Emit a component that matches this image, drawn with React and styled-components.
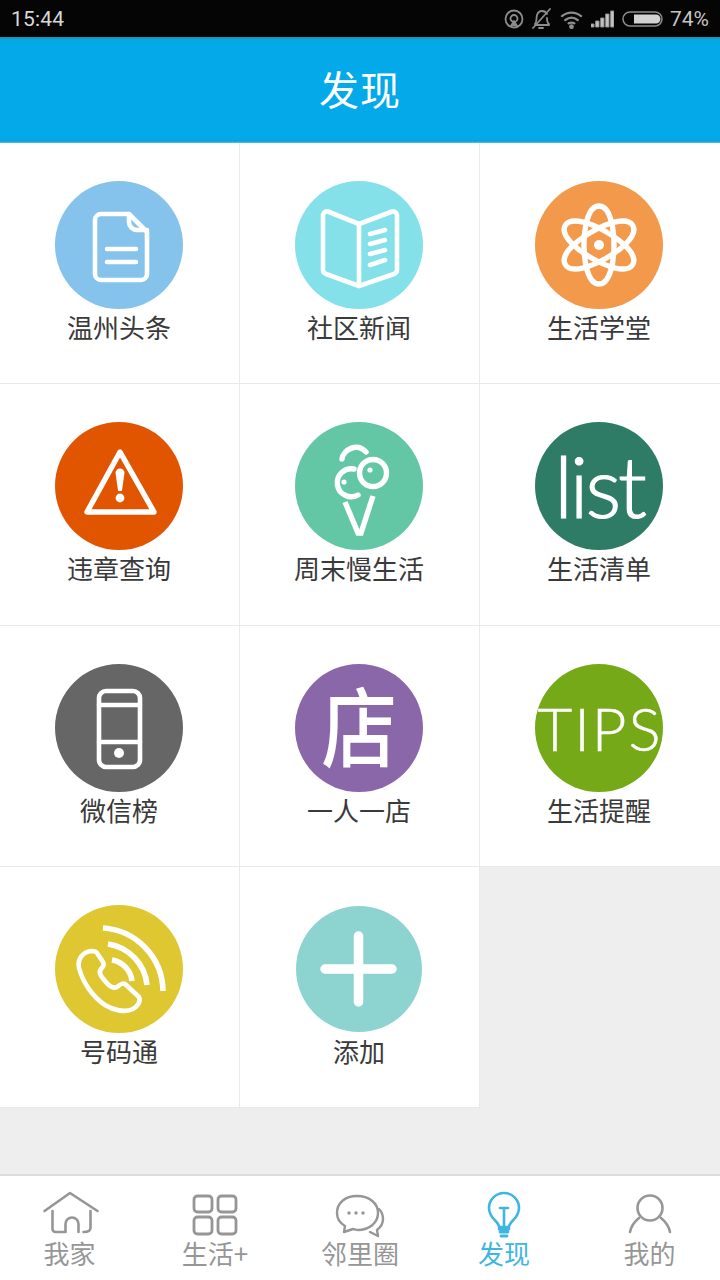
import React from 'react'
import styled, { createGlobalStyle } from 'styled-components'

const CJK = '"Noto Sans CJK SC", "Noto Sans", sans-serif'

const GlobalStyle = createGlobalStyle`
  html, body {
    margin: 0;
    padding: 0;
    background: #eeeeee;
  }
  * {
    box-sizing: border-box;
  }
`

const Line = styled.svg.attrs({ fill: 'none', stroke: '#fff', strokeLinecap: 'round', strokeLinejoin: 'round' })`
  display: block;
  width: 100%;
  height: 100%;
`

const DocIcon = () => (
  <Line viewBox="0 0 128 128" strokeWidth="4.6">
    <path d="M74 33H46a6 6 0 0 0-6 6v54a6 6 0 0 0 6 6h40a6 6 0 0 0 6-6V51Z" />
    <path d="M74 33v8a8 8 0 0 0 8 8h10" />
    <path d="M52 68h29M52 81h29" />
  </Line>
)

const BookIcon = () => (
  <Line viewBox="0 0 128 128" strokeWidth="4.6">
    <path d="M64 43 34 31a4 4 0 0 0-6 4v53a5 5 0 0 0 3 5l33 12 35-12a5 5 0 0 0 3-5V35a4 4 0 0 0-6-4Z" />
    <path d="M64 43v62" />
    <path d="M75 53l15-4M75 63l15-4M75 73l15-4M75 84l15-5" />
  </Line>
)

const petal = 'M64 25C76 25 79 50 79 64S76 103 64 103 49 78 49 64 52 25 64 25Z'

const AtomIcon = () => (
  <Line viewBox="0 0 128 128" strokeWidth="5.4">
    <path d={petal} />
    <path d={petal} transform="rotate(60 64 64)" />
    <path d={petal} transform="rotate(120 64 64)" />
    <circle cx="64" cy="64" r="5" fill="#fff" stroke="none" />
  </Line>
)

const WarningIcon = () => (
  <Line viewBox="0 0 128 128" strokeWidth="5.4">
    <path d="M65 30 32 90h67Z" />
    <path d="M60.500 51a4.500 4.500 0 0 1 9 0l-2.600 18h-3.800Z" fill="#fff" stroke="none" />
    <circle cx="65" cy="76" r="4.400" fill="#fff" stroke="none" />
  </Line>
)

const IceCreamIcon = () => (
  <Line viewBox="0 0 128 128" strokeWidth="5.4">
    <path d="M50 80 63 111H66L78 74" strokeLinecap="butt" strokeLinejoin="miter" />
    <circle cx="78" cy="51" r="13.500" />
    <circle cx="75" cy="48" r="2.600" fill="#fff" stroke="none" />
    <path d="M59 47A14 14 0 1 0 63 73" />
    <circle cx="49" cy="60" r="2.600" fill="#fff" stroke="none" />
    <path d="M47 37C48 28 62 20 71 30" />
  </Line>
)

const PhoneIcon = () => (
  <Line viewBox="0 0 128 128" strokeWidth="4.6">
    <rect x="44" y="27" width="41" height="76" rx="7" />
    <path d="M44 41h41M44 78h41" />
    <circle cx="64" cy="89" r="5" fill="#fff" stroke="none" />
  </Line>
)

const CallIcon = () => (
  <Line viewBox="0 0 128 128" strokeWidth="5.6">
    <path
      d="M36 46C28 47 22 54 24 63 28 78 38 92 50 100 58 105 70 108 78 104 83 101 86 96 84 92L70 79C67 77 65 80 62 82 58 84 54 81 50 76 46 71 43 68 46 64 48 62 50 60 48 57L42 48C41 46 38 46 36 46Z"
      strokeWidth="4.600"
    />
    <path d="M48 23A64 64 0 0 1 108 86" strokeLinecap="butt" />
    <path d="M53 39A46 46 0 0 1 92 80" strokeLinecap="butt" />
    <path d="M57 55A24 24 0 0 1 77 76" strokeLinecap="butt" />
  </Line>
)

const PlusIcon = () => (
  <Line viewBox="0 0 126 126" strokeWidth="9.500">
    <path d="M62.500 30v66M29 63h67" />
  </Line>
)

const Page = styled.div`
  width: 720px;
  height: 1280px;
  display: flex;
  flex-direction: column;
  overflow: hidden;
  font-family: ${CJK};
`

const StatusBar = styled.div`
  height: 37px;
  flex: none;
  background: #050505;
  color: #c9c9c9;
  display: flex;
  align-items: center;
  padding: 0 11px;
  font-family: "Roboto", sans-serif;
  font-size: 21px;
`

const Clock = styled.span`
  color: #d8d8d8;
  letter-spacing: 0.2px;
`

const StatusIcons = styled.div`
  margin-left: auto;
  display: flex;
  align-items: center;
  gap: 8px;
`

const Glyph = styled.svg.attrs({ fill: 'none', stroke: '#8c8c8c', strokeLinecap: 'round', strokeLinejoin: 'round' })`
  display: block;
`

const Percent = styled.span`
  margin-left: -1px;
  color: #c4c4c4;
`

const Header = styled.header`
  height: 106px;
  flex: none;
  background: linear-gradient(
    #1a8fb5 0,
    #0fa4d8 2px,
    #03a9e8 5px,
    #03a9e8 calc(100% - 4px),
    #0a9ed6 calc(100% - 2px),
    #4fc6ea 100%
  );
  color: #fff;
  font-size: 40px;
  display: flex;
  align-items: center;
  justify-content: center;
  letter-spacing: 1px;
  padding-bottom: 4px;
`

const Main = styled.main`
  flex: 1;
  background: #eeeeee;
`

const Grid = styled.div`
  display: grid;
  grid-template-columns: repeat(3, 240px);
  grid-auto-rows: 241.25px;
`

const Cell = styled.div`
  background: #fff;
  display: flex;
  flex-direction: column;
  align-items: center;
  padding-top: 38px;
  padding-right: ${(p) => (p.$last ? '2px' : '1px')};
  border-bottom: 1px solid #e9e9e9;
  border-right: ${(p) => (p.$last ? 'none' : '1px solid #e9e9e9')};
`

const Circle = styled.div`
  width: ${(p) => p.$size}px;
  height: ${(p) => p.$size}px;
  margin: ${(p) => (128 - p.$size) / 2}px;
  flex: none;
  border-radius: 50%;
  background: ${(p) => p.$bg};
  color: #fff;
  display: flex;
  align-items: center;
  justify-content: center;
`

const WordList = styled.span`
  font-family: "Lato", sans-serif;
  font-weight: 300;
  font-size: 84px;
  line-height: 1;
  letter-spacing: -3px;
  margin-top: -1px;
  -webkit-text-stroke: 1.2px #fff;
`

const WordTips = styled.span`
  font-family: "Lato", sans-serif;
  font-weight: 300;
  font-size: 60px;
  line-height: 1;
  letter-spacing: 2px;
  margin-right: -2px;
  white-space: nowrap;
  -webkit-text-stroke: 0.5px #fff;
`

const WordShop = styled.span`
  font-size: 78px;
  line-height: 1;
  font-weight: 500;
  margin-top: -10px;
  transform: scale(0.97, 1.12);
`

const Label = styled.div`
  margin-top: 3px;
  font-size: 26px;
  line-height: 30px;
  color: #3a3a3a;
`

const TabBar = styled.nav`
  height: 106px;
  flex: none;
  background: #fff;
  border-top: 2px solid #dcdcdc;
  display: grid;
  grid-template-columns: 139px 152px 138px 150px 141px;
  padding-top: 15px;
`

const Tab = styled.div`
  display: flex;
  flex-direction: column;
  align-items: center;
  color: ${(p) => (p.$active ? '#3fb6e2' : '#969696')};
  font-size: 26px;
  line-height: 30px;
`

const TabGlyph = styled.svg.attrs({ fill: 'none', stroke: 'currentColor', strokeLinecap: 'round', strokeLinejoin: 'round' })`
  display: block;
  width: 60px;
  height: 50px;
  margin-bottom: -3px;
`

const Tabs = [
  {
    label: '我家',
    icon: (
      <TabGlyph viewBox="0 0 60 50" strokeWidth="2.600">
        <path d="M4.500 20 30 2 57.500 20" />
        <path d="M12.500 20v18a3 3 0 0 0 3 3h10V33a6.500 6.500 0 0 1 13 0v8" />
        <path d="M50.500 20v17c0 3-2 4-7 4" />
      </TabGlyph>
    ),
  },
  {
    label: '生活+',
    icon: (
      <TabGlyph viewBox="0 0 60 50" strokeWidth="2.800">
        <rect x="9" y="5" width="18" height="16" rx="3.500" />
        <rect x="33" y="5" width="18" height="16" rx="3.500" />
        <rect x="9" y="26" width="18" height="17" rx="3.500" />
        <rect x="33" y="26" width="18" height="17" rx="3.500" />
      </TabGlyph>
    ),
  },
  {
    label: '邻里圈',
    icon: (
      <TabGlyph viewBox="0 0 60 50" strokeWidth="2.400">
        <path d="M27 5C15 5 7 12 7 22c0 6 3 10 8 13l-1 6 9-3c1 0 3 1 5 1 11 0 20-7 20-17S39 5 27 5Z" />
        <path d="M49 18c3 3 4 7 4 10 0 5-2 8-6 11l1 6-8-4" />
        <circle cx="19" cy="22" r="1.700" fill="currentColor" stroke="none" />
        <circle cx="26" cy="22" r="1.700" fill="currentColor" stroke="none" />
        <circle cx="33" cy="22" r="1.700" fill="currentColor" stroke="none" />
      </TabGlyph>
    ),
  },
  {
    label: '发现',
    active: true,
    icon: (
      <TabGlyph viewBox="0 0 60 50" strokeWidth="2.600">
        <path d="M25 36c0-6-10-8-10-19a15 15 0 0 1 30 0c0 11-10 13-10 19Z" />
        <path d="M26 17h8M30 17v19" />
        <path d="M25 38h10M26 41h8M27 45h6" strokeWidth="2.800" />
      </TabGlyph>
    ),
  },
  {
    label: '我的',
    icon: (
      <TabGlyph viewBox="0 0 60 50" strokeWidth="2.600">
        <ellipse cx="30" cy="17" rx="12.500" ry="12.500" />
        <path d="M19 27C14 31 11 36 10 41M41 27c5 4 8 9 9 14" />
      </TabGlyph>
    ),
  },
]

const Items = [
  { label: '温州头条', bg: '#85c3ec', icon: <DocIcon /> },
  { label: '社区新闻', bg: '#84e1ea', icon: <BookIcon /> },
  { label: '生活学堂', bg: '#f2994b', icon: <AtomIcon />, last: true },
  { label: '违章查询', bg: '#e25500', icon: <WarningIcon /> },
  { label: '周末慢生活', bg: '#63c6a5', icon: <IceCreamIcon /> },
  { label: '生活清单', bg: '#2e7c66', icon: <WordList>list</WordList>, last: true },
  { label: '微信榜', bg: '#666666', icon: <PhoneIcon /> },
  { label: '一人一店', bg: '#8a67a8', icon: <WordShop>店</WordShop> },
  { label: '生活提醒', bg: '#76a917', icon: <WordTips>TIPS</WordTips>, last: true },
  { label: '号码通', bg: '#dfc732', icon: <CallIcon /> },
  { label: '添加', bg: '#8dd4d0', size: 126, icon: <PlusIcon /> },
]

const App = () => {
  return (
    <Page>
      <GlobalStyle />
      <StatusBar>
        <Clock>15:44</Clock>
        <StatusIcons>
          <Glyph width="20" height="20" viewBox="0 0 20 20" strokeWidth="1.800">
            <circle cx="10" cy="10" r="8.500" />
            <circle cx="10" cy="9.500" r="3.500" />
            <path d="M7 17l3-5 3 5" fill="#8c8c8c" />
          </Glyph>
          <Glyph width="20" height="24" viewBox="0 0 20 24" strokeWidth="1.800">
            <path d="M3 17c2-2 1-5 2-9 1-3 3-4 5-4 2 0 4 1 5 3M15 11c0 3 0 5 2 6v1H3" />
            <path d="M1 21 18 2" />
            <path d="M7 21h4" />
          </Glyph>
          <Glyph width="23" height="20" viewBox="0 0 24 20" stroke="#c4c4c4" strokeWidth="2.400">
            <path d="M2 7c6-5 14-5 20 0M5.500 11c4-3 9-3 13 0M9 14.500c2-1 4-1 6 0" />
            <circle cx="12" cy="18" r="1.300" fill="#c4c4c4" />
          </Glyph>
          <Glyph width="23" height="18" viewBox="0 0 23 18" stroke="none">
            <rect x="0" y="14" width="3" height="3" fill="#c4c4c4" />
            <rect x="5" y="11" width="3" height="6" fill="#c4c4c4" />
            <rect x="10" y="8" width="3" height="9" fill="#c4c4c4" />
            <rect x="15" y="4" width="3" height="13" fill="#c4c4c4" />
            <rect x="20" y="1" width="3" height="16" fill="#c4c4c4" />
          </Glyph>
          <Glyph width="41" height="16" viewBox="0 0 41 16" stroke="#b0b0b0" strokeWidth="1.500">
            <rect x="1" y="1" width="39" height="14" rx="7" />
            <path d="M12 3.500h22a4.500 4.500 0 0 1 0 9H12Z" fill="#d2d2d2" stroke="none" />
          </Glyph>
          <Percent>74%</Percent>
        </StatusIcons>
      </StatusBar>
      <Header>发现</Header>
      <Main>
        <Grid>
          {Items.map((item) => (
            <Cell key={item.label} $last={item.last}>
              <Circle $bg={item.bg} $size={item.size || 128}>{item.icon}</Circle>
              <Label>{item.label}</Label>
            </Cell>
          ))}
        </Grid>
      </Main>
      <TabBar>
        {Tabs.map((tab) => (
          <Tab key={tab.label} $active={tab.active}>
            {tab.icon}
            {tab.label}
          </Tab>
        ))}
      </TabBar>
    </Page>
  )
}

export default App
